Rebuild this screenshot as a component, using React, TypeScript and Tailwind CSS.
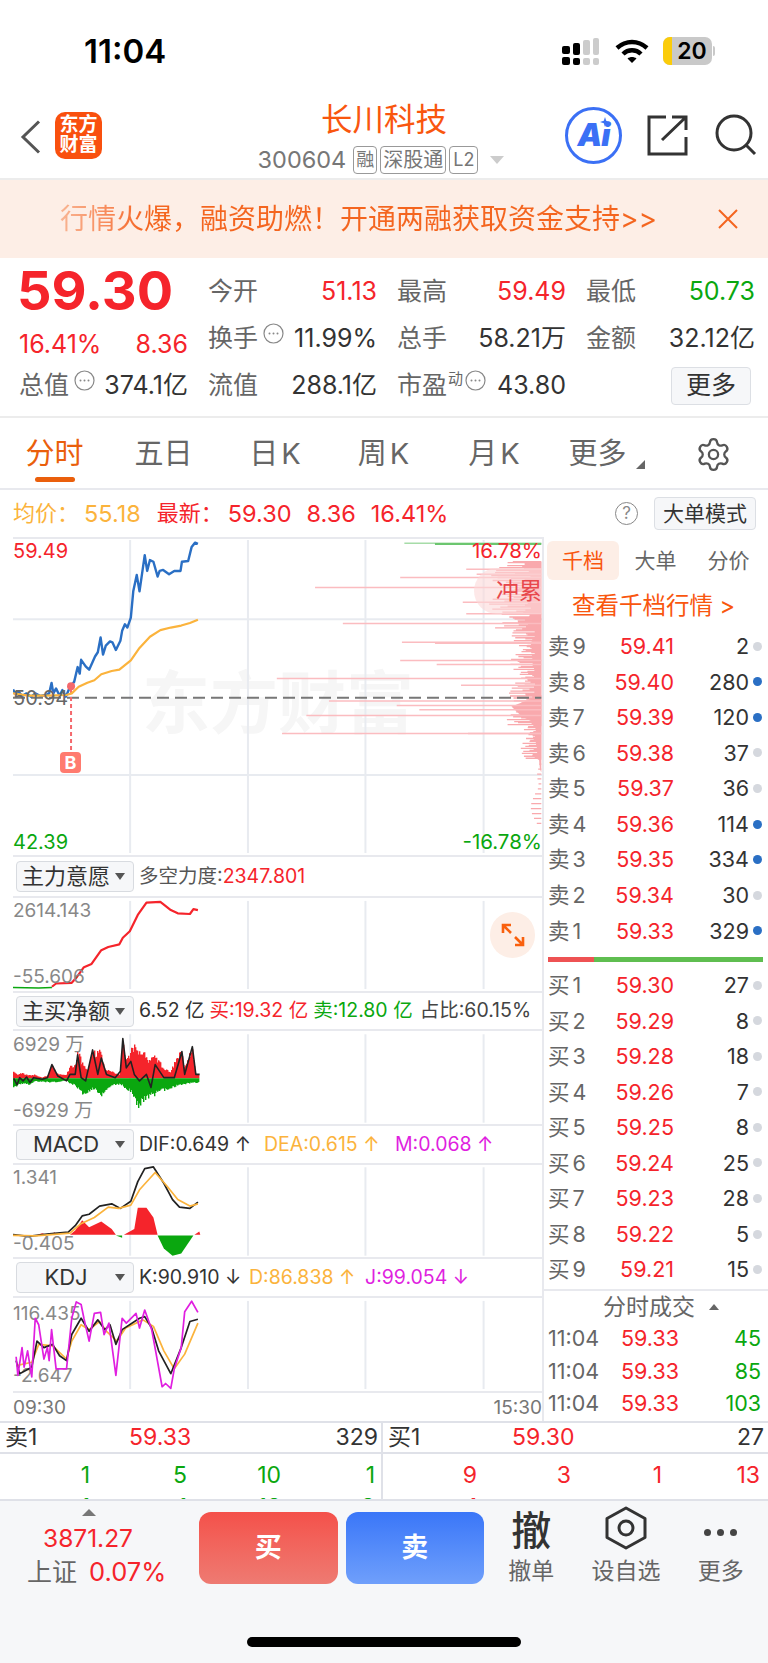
import { Settings } from 'lucide-react';

const RED = '#f5242b';
const GREEN = '#0aa70f';

type P = number[][];

const toPts = (a: P) => a.map((p) => p.join(',')).join(' ');

// walks an outline left to right and drops one thin bar per pixel
function barPath(env: P, base: number, seed: number) {
  let d = '';
  for (let x = env[0][0]; x <= env[env.length - 1][0]; x += 2.877) {
    const i = Math.max(0, env.findIndex((p) => p[0] >= x) - 1);
    const a = env[i];
    const b = env[i + 1] || a;
    const t = b[0] === a[0] ? 0 : (x - a[0]) / (b[0] - a[0]);
    const n = Math.sin(x * seed) * 43758.5;
    const wob = (n - Math.floor(n)) * 0.3 + 0.75;
    const y = base + (a[1] + (b[1] - a[1]) * t - base) * wob;
    d += `M${x.toFixed(1)} ${base}V${y.toFixed(1)}`;
  }
  return d;
}

function Line({ points, color, w = 1.5 }: { points: P; color: string; w?: number }) {
  return (
    <polyline
      points={toPts(points)}
      fill="none"
      stroke={color}
      strokeWidth={w}
      strokeLinejoin="round"
      vectorEffect="non-scaling-stroke"
    />
  );
}

function Grid({ y1, y2 }: { y1: number; y2: number }) {
  return (
    <g>
      {[373, 712, 1050, 1390].map((x) => (
        <line key={x} x1={x} x2={x} y1={y1} y2={y2} stroke="#e8ebf0" strokeWidth={2} vectorEffect="non-scaling-stroke" />
      ))}
    </g>
  );
}

const bluePts: P = [[36,478],[42,490],[52,484],[62,498],[75,490],[88,500],[100,490],[115,498],[130,495],[140,490],[147,458],[152,490],[160,475],[170,497],[178,480],[188,500],[200,470],[212,455],[222,410],[228,430],[232,388],[245,408],[255,418],[265,395],[272,378],[280,365],[288,320],[295,372],[303,345],[315,332],[322,335],[332,358],[345,330],[350,300],[358,280],[365,290],[375,260],[382,180],[392,130],[400,180],[415,70],[422,118],[430,85],[440,90],[452,135],[458,118],[468,115],[485,128],[500,118],[518,118],[522,90],[540,88],[550,45],[560,32],[568,36]];
const avgPts: P = [[36,490],[80,497],[130,497],[190,495],[205,490],[225,470],[250,458],[270,450],[290,432],[320,422],[342,418],[375,390],[400,352],[430,318],[460,298],[490,290],[520,284],[545,276],[568,266]];
const longDepth: P = [[168,905],[138,1150],[278,985],[335,1155],[338,1250],[390,1150],[402,1255],[445,795],[465,1325],[513,945],[527,1140],[540,1205],[557,880],[612,810],[612,1345],[113,1340],[213,1330],[248,1340],[128,1370]];

function depthPath() {
  let d = '';
  for (let y = 90; y < 890; y += 3) {
    const core = y < 300 ? 150 : y < 480 ? 90 : y < 590 ? 100 : y < 690 ? 60 : 30;
    const w = core * (0.2 + 0.8 * Math.abs(Math.sin(y * 1.7) * Math.cos(y * 0.43)));
    if (y > 690 && y % 15 !== 0) continue;
    d += `M${(1556 - w).toFixed(0)} ${y}H1556`;
  }
  return d;
}

function MainChart() {
  return (
    <div className="relative h-[320px] border-y-2 border-[#e8e9ee] overflow-hidden">
      <div className="absolute left-[129px] top-[126px] text-[68px] leading-[76px] font-bold text-[#f6f6f6] whitespace-nowrap">东方财富</div>
      <svg className="absolute inset-0 w-full h-full" viewBox="36 21 1522 960" preserveAspectRatio="none">
        <Grid y1={24} y2={975} />
        <line x1={36} x2={1558} y1={265} y2={265} stroke="#e8ebf0" strokeWidth={2} vectorEffect="non-scaling-stroke" />
        <line x1={36} x2={1558} y1={738} y2={738} stroke="#e8ebf0" strokeWidth={2} vectorEffect="non-scaling-stroke" />
        <polygon points="1556,90 1545,100 1540,400 1545,640 1552,720 1556,730" fill="#f9a9ad" />
        <path d={depthPath()} stroke="#f9a9ad" strokeWidth={1.3} fill="none" vectorEffect="non-scaling-stroke" />
        <polygon points="1556,495 1470,530 1500,560 1556,590" fill="#f9a9ad" />
        {longDepth.map(([y, x]) => (
          <line key={`${y}-${x}`} x1={x} x2={1556} y1={y} y2={y} stroke="#fbbcc0" strokeWidth={1.5} vectorEffect="non-scaling-stroke" />
        ))}
        <line x1={1162} x2={1556} y1={34} y2={34} stroke="#a6dca8" strokeWidth={1.5} vectorEffect="non-scaling-stroke" />
        <line x1={1250} x2={1556} y1={36} y2={36} stroke="#6cc66f" strokeWidth={2} vectorEffect="non-scaling-stroke" />
        <line x1={36} x2={1556} y1={503} y2={503} stroke="#777" strokeWidth={2} strokeDasharray="12 6" vectorEffect="non-scaling-stroke" />
        <line x1={203} x2={203} y1={480} y2={665} stroke="#f4686c" strokeWidth={2} strokeDasharray="4 3" vectorEffect="non-scaling-stroke" />
        <Line points={bluePts} color="#2a6fc4" w={2.4} />
        <Line points={avgPts} color="#fbb33c" w={2.2} />
        <ellipse cx={203} cy={468} rx={11.5} ry={12} fill="#f4686c" />
      </svg>
      <span className="absolute left-0 top-[0px] text-[20px] leading-[24px] text-[#f5242b]">59.49</span>
      <span className="absolute right-0 top-[0px] text-[20.5px] leading-[24px] text-[#f5242b]">16.78%</span>
      <span className="absolute left-0 top-[147px] text-[20px] leading-[24px] text-[#666]">50.94</span>
      <span className="absolute left-0 bottom-[1px] text-[20px] leading-[24px] text-[#0aa70f]">42.39</span>
      <span className="absolute right-0 bottom-[1px] text-[20.5px] leading-[24px] text-[#0aa70f]">-16.78%</span>
      <div className="absolute right-0 top-[29px] w-[68px] h-[46px] rounded-l-full bg-[#fbd9d9]/60 flex items-center justify-end text-[23px] text-[#e8474c]">冲累</div>
      <div className="absolute left-[47px] top-[213px] w-[21px] h-[21px] rounded-[4px] bg-[#ff7b6f] text-white text-[18px] leading-[21px] font-bold text-center">B</div>
    </div>
  );
}

function Dropdown({ label }: { label: string }) {
  return (
    <div className="ml-[3px] w-[118px] h-[31px] shrink-0 flex items-center rounded-[4px] border border-[#d8dbe0] bg-[#f6f7f9] text-[22px] text-[#333] pr-[8px]">
      <span className="flex-1 text-center whitespace-nowrap">{label}</span>
      <span className="w-0 h-0 border-x-[5px] border-x-transparent border-t-[7px] border-t-[#555]" />
    </div>
  );
}

function PanelHead({ label, children, h = 'h-[39px]' }: { label: string; children: React.ReactNode; h?: string }) {
  return (
    <div className={`${h} flex items-center gap-[5px] text-[19.5px] whitespace-nowrap`}>
      <Dropdown label={label} />
      {children}
    </div>
  );
}

const sideLabel = 'absolute left-0 text-[19px] leading-[24px] text-[#888]';

const redLine: P = [[148,380],[160,370],[205,368],[220,350],[240,320],[262,310],[290,268],[310,258],[342,250],[352,230],[372,210],[395,160],[420,122],[460,120],[490,145],[510,155],[545,157],[555,142],[568,145]];

function WillChart() {
  return (
    <div className="relative h-[95px] border-b-2 border-[#e8e9ee]">
      <svg className="absolute inset-0 w-full h-full" viewBox="36 108 1522 285" preserveAspectRatio="none">
        <Grid y1={117} y2={387} />
        <Line points={[[36,382],[110,384],[148,382]]} color="#0aa70f" w={1.5} />
        <Line points={redLine} color={RED} w={2.2} />
      </svg>
      <span className={`${sideLabel} top-[1px]`}>2614.143</span>
      <span className={`${sideLabel} bottom-[2px]`}>-55.606</span>
      <button className="absolute left-[477px] top-[14px] w-[45px] h-[46px] rounded-full bg-[#fdeee6] flex items-center justify-center">
        <svg width="24" height="24" viewBox="0 0 24 24" fill="none" stroke="#f9600e" strokeWidth="2.6">
          <path d="M2 10V2H10M2 2L10 10M22 14V22H14M22 22L14 14" />
        </svg>
      </button>
    </div>
  );
}

const buyEnv: P = [[38,625],[48,640],[60,635],[80,642],[100,640],[120,650],[140,640],[148,605],[160,635],[190,640],[200,615],[215,610],[222,560],[235,600],[250,625],[265,565],[280,570],[288,560],[300,620],[320,630],[345,640],[352,515],[360,600],[370,580],[385,545],[400,570],[412,565],[425,600],[445,575],[470,620],[490,630],[520,560],[530,620],[552,550],[562,640],[573,640]];
const sellEnv: P = [[38,682],[60,668],[85,672],[100,662],[150,665],[190,660],[220,680],[240,705],[270,685],[290,712],[310,680],[345,670],[380,700],[395,745],[410,725],[435,710],[470,690],[520,672],[573,665]];
const netLine: P = [[38,652],[48,672],[55,650],[65,660],[75,648],[85,665],[95,650],[120,655],[135,650],[148,610],[165,645],[190,660],[200,640],[215,640],[222,580],[232,650],[245,660],[265,565],[280,640],[290,590],[305,640],[330,650],[345,630],[352,530],[362,620],[375,600],[385,640],[400,660],[420,640],[433,680],[445,610],[470,650],[500,650],[522,570],[530,640],[552,555],[562,640],[573,640]];

function NetChart() {
  return (
    <div className="relative h-[95px] border-b-2 border-[#e8e9ee]">
      <svg className="absolute inset-0 w-full h-full" viewBox="36 507 1522 285" preserveAspectRatio="none">
        <Grid y1={517} y2={788} />
        <path d={barPath(buyEnv, 652, 2.3)} stroke={RED} strokeWidth={1.4} fill="none" vectorEffect="non-scaling-stroke" />
        <path d={barPath(sellEnv, 652, 3.1)} stroke={GREEN} strokeWidth={1.4} fill="none" vectorEffect="non-scaling-stroke" />
        <Line points={netLine} color="#222" w={1.6} />
      </svg>
      <span className={`${sideLabel} top-[2px]`}>6929 万</span>
      <span className={`${sideLabel} bottom-[1px]`}>-6929 万</span>
    </div>
  );
}

const macdDif: P = [[36,342],[80,348],[140,340],[195,335],[215,315],[235,285],[255,280],[285,255],[320,248],[345,262],[375,240],[395,180],[415,140],[440,135],[470,185],[495,235],[515,258],[545,262],[568,243]];
const macdDea: P = [[36,345],[100,346],[200,338],[230,310],[270,290],[310,258],[340,262],[375,252],[400,205],[445,152],[480,195],[510,235],[545,255],[568,248]];

function MacdChart() {
  return (
    <div className="relative h-[94px] border-b-2 border-[#e8e9ee]">
      <svg className="absolute inset-0 w-full h-full" viewBox="36 129 1522 282" preserveAspectRatio="none">
        <Grid y1={136} y2={407} />
        <polygon fill={RED} points="105,343 120,338 135,343" />
        <polygon fill={RED} points="145,343 155,335 165,343" />
        <polygon fill={RED} points="200,343 215,330 235,298 255,320 290,302 320,325 332,343" />
        <polygon fill={RED} points="355,343 385,325 395,260 420,260 440,290 452,343" />
        <polygon fill={RED} points="558,343 572,333 575,343" />
        <polygon fill={GREEN} points="332,345 350,352 350,345" />
        <polygon fill={GREEN} points="452,345 470,385 495,407 520,400 555,345" />
        <Line points={macdDif} color="#222" w={1.7} />
        <Line points={macdDea} color="#fbb33c" w={1.7} />
      </svg>
      <span className={`${sideLabel} top-[1px]`}>1.341</span>
      <span className={`${sideLabel} bottom-[1px]`}>-0.405</span>
    </div>
  );
}

const kdjJ: P = [[45,708],[50,765],[62,680],[68,740],[78,690],[90,770],[100,590],[110,610],[125,715],[135,680],[140,720],[147,625],[160,745],[190,745],[205,590],[218,540],[232,548],[240,590],[255,660],[270,575],[288,572],[298,640],[312,605],[332,765],[350,590],[362,605],[390,575],[400,620],[415,565],[435,625],[448,700],[465,800],[475,790],[490,805],[500,745],[520,680],[530,570],[550,538],[568,572]];
const kdjK: P = [[45,720],[55,760],[90,740],[105,660],[125,680],[150,670],[170,705],[190,720],[205,640],[232,590],[255,630],[280,595],[300,625],[315,610],[332,670],[350,625],[400,590],[415,585],[435,620],[455,690],[490,760],[520,680],[545,600],[568,593]];
const kdjD: P = [[45,735],[90,725],[110,670],[150,675],[190,715],[205,660],[232,610],[255,625],[285,600],[305,630],[335,660],[360,620],[410,595],[440,615],[470,690],[500,745],[530,700],[568,605]];

function KdjChart() {
  return (
    <div className="relative h-[95px] border-b-2 border-[#e8e9ee]">
      <span className={`${sideLabel} top-[4px]`}>116.435</span>
      <span className={`${sideLabel} bottom-[3px]`}>-2.647</span>
      <svg className="absolute inset-0 w-full h-full" viewBox="36 528 1522 285" preserveAspectRatio="none">
        <Grid y1={537} y2={807} />
        <Line points={kdjD} color="#fbb33c" w={1.7} />
        <Line points={kdjK} color="#222" w={1.7} />
        <Line points={kdjJ} color="#e01fe0" w={1.7} />
      </svg>
    </div>
  );
}

function LeftCharts() {
  return (
    <div className="w-[529px] ml-[13px] shrink-0">
      <MainChart />
      <PanelHead label="主力意愿">
        <span className="text-[#555]">多空力度:<span className="text-[#f5242b]">2347.801</span></span>
      </PanelHead>
      <div className="border-t-2 border-[#e8e9ee]" />
      <WillChart />
      <PanelHead label="主买净额" h="h-[36px]">
        <span className="text-[#333]">6.52 亿</span>
        <span className="text-[#f5242b]">买:19.32 亿</span>
        <span className="text-[#0aa70f]">卖:12.80 亿</span>
        <span className="text-[#444] ml-[2px]">占比:60.15%</span>
      </PanelHead>
      <div className="border-t-2 border-[#e8e9ee]" />
      <NetChart />
      <PanelHead label="MACD" h="h-[37px]">
        <span className="text-[#333] w-[120px]">DIF:0.649 ↑</span>
        <span className="text-[#fbb33c] w-[126px]">DEA:0.615 ↑</span>
        <span className="text-[#e01fe0]">M:0.068 ↑</span>
      </PanelHead>
      <div className="border-t-2 border-[#e8e9ee]" />
      <MacdChart />
      <PanelHead label="KDJ" h="h-[37px]">
        <span className="text-[#333] w-[105px]">K:90.910 ↓</span>
        <span className="text-[#fbb33c] w-[111px]">D:86.838 ↑</span>
        <span className="text-[#e01fe0]">J:99.054 ↓</span>
      </PanelHead>
      <div className="border-t-2 border-[#e8e9ee]" />
      <KdjChart />
      <div className="h-[30px] flex items-center justify-between text-[19px] text-[#777]">
        <span>09:30</span>
        <span>15:30</span>
      </div>
    </div>
  );
}

const asks = [
  ['卖', '9', '59.41', '2', false], ['卖', '8', '59.40', '280', true], ['卖', '7', '59.39', '120', true],
  ['卖', '6', '59.38', '37', false], ['卖', '5', '59.37', '36', false], ['卖', '4', '59.36', '114', true],
  ['卖', '3', '59.35', '334', true], ['卖', '2', '59.34', '30', false], ['卖', '1', '59.33', '329', true],
] as const;
const bids = [
  ['买', '1', '59.30', '27', false], ['买', '2', '59.29', '8', false], ['买', '3', '59.28', '18', false],
  ['买', '4', '59.26', '7', false], ['买', '5', '59.25', '8', false], ['买', '6', '59.24', '25', false],
  ['买', '7', '59.23', '28', false], ['买', '8', '59.22', '5', false], ['买', '9', '59.21', '15', false],
] as const;

function BookRow({ row }: { row: readonly [string, string, string, string, boolean] }) {
  const [side, n, price, qty, big] = row;
  return (
    <div className="h-[35.55px] shrink-0 flex items-center text-[21.5px] pl-[4px]">
      <span className="w-[42px] text-[#666] whitespace-nowrap">{side}<span className="ml-[3px]">{n}</span></span>
      <span className="w-[84px] text-right text-[#f5242b]">{price}</span>
      <span className="w-[75px] text-right text-[#333]">{qty}</span>
      <span className={big ? 'ml-[4px] w-[9px] h-[9px] rounded-full bg-[#2a6fc4]' : 'ml-[4px] w-[9px] h-[9px] rounded-full bg-[#d5d8de]'} />
    </div>
  );
}

function OrderBook() {
  return (
    <div className="flex-1 border-l-2 border-[#e8e9ee] flex flex-col overflow-hidden">
      <div className="mt-[4px] ml-[3px] flex h-[39px] shrink-0 text-[21px] text-[#666]">
        <div className="w-[72px] rounded-[6px] bg-[#fdeee6] text-[#f9560e] flex items-center justify-center">千档</div>
        <div className="w-[73px] flex items-center justify-center">大单</div>
        <div className="w-[73px] flex items-center justify-center">分价</div>
      </div>
      <div className="h-[48.5px] shrink-0 flex items-center pl-[28px] pt-[3px] text-[23.5px] text-[#f9560e] whitespace-nowrap">查看千档行情 &gt;</div>
      {asks.map((r) => <BookRow key={r[1]} row={r} />)}
      <div className="mt-[9px] mb-[5px] ml-[4px] w-[215px] h-[5px] shrink-0 flex">
        <div className="w-[46px] bg-[#ee5253]" />
        <div className="flex-1 bg-[#5fbe50]" />
      </div>
      {bids.map((r) => <BookRow key={r[1]} row={r} />)}
      <div className="mt-[2px] shrink-0 border-t-2 border-[#e8e9ee] h-[33px] flex items-center justify-center gap-[14px] pl-[10px] text-[23px] text-[#666]">
        <span>分时成交</span>
        <span className="w-0 h-0 border-x-[5px] border-x-transparent border-b-[6px] border-b-[#666]" />
      </div>
      {['45', '85', '103'].map((q) => (
        <div key={q} className="h-[32.5px] shrink-0 flex items-center text-[21.5px] pl-[4px]">
          <span className="w-[56px] text-[#666]">11:04</span>
          <span className="w-[75px] text-right text-[#f5242b]">59.33</span>
          <span className="w-[82px] text-right text-[#0aa70f]">{q}</span>
        </div>
      ))}
    </div>
  );
}

function MoreIcon() {
  return (
    <svg width="21" height="21" viewBox="0 0 21 21" className="shrink-0 -mt-[10px]">
      <circle cx="10.5" cy="10.5" r="9.5" fill="none" stroke="#888" strokeWidth="1.2" />
      <circle cx="6.5" cy="10.5" r="1" fill="#888" />
      <circle cx="10.5" cy="10.5" r="1" fill="#888" />
      <circle cx="14.5" cy="10.5" r="1" fill="#888" />
    </svg>
  );
}

function Cell({ label, value, color = 'text-[#333]', icon }: { label: string; value: string; color?: string; icon?: boolean }) {
  return (
    <div className="flex items-center justify-between whitespace-nowrap">
      <span className="flex items-center gap-[5px] text-[#666] text-[25px]">{label}{icon && <MoreIcon />}</span>
      <span className={color}>{value}</span>
    </div>
  );
}

function StatusBar() {
  return (
    <div className="h-[96px] relative">
      <span className="absolute left-[84px] top-[32px] text-[33px] leading-[38px] font-semibold text-black">11:04</span>
      <div className="absolute left-[562px] top-[38px] flex items-end gap-[3px]">
        <div className="flex flex-col gap-[3px]">
          <div className="w-[8px] h-[8px] mt-[7px] rounded-[2px] bg-black" />
          <div className="w-[8px] h-[8px] rounded-[2px] bg-black" />
        </div>
        <div className="flex flex-col gap-[3px]">
          <div className="w-[7px] h-[12px] rounded-[2px] bg-black" />
          <div className="w-[7px] h-[7px] rounded-[2px] bg-black" />
        </div>
        <div className="flex flex-col gap-[3px]">
          <div className="w-[7px] h-[15px] rounded-[2px] bg-[#ccc]" />
          <div className="w-[7px] h-[7px] rounded-[2px] bg-[#ccc]" />
        </div>
        <div className="flex flex-col gap-[3px]">
          <div className="w-[6px] h-[17px] rounded-[2px] bg-[#ccc]" />
          <div className="w-[6px] h-[7px] rounded-[2px] bg-[#ccc]" />
        </div>
      </div>
      <svg className="absolute left-[615px] top-[39px]" width="34" height="25" viewBox="0 0 34 25" fill="none" stroke="#000" strokeWidth="4.4">
        <path d="M2 9C11 1 23 1 32 9" />
        <path d="M8 15C13 10 21 10 26 15" />
        <path d="M17 24L12.5 19.5C15 17.5 19 17.5 21.5 19.5Z" fill="#000" stroke="none" />
      </svg>
      <div className="absolute left-[663px] top-[37px] w-[49px] h-[28px] rounded-[7px] bg-[#c9c9c9] overflow-hidden flex">
        <div className="w-[9px] bg-[#fbcc0a]" />
        <span className="flex-1 text-center text-[23px] leading-[28px] font-semibold text-black">20</span>
      </div>
      <div className="absolute left-[713px] top-[46px] w-[2px] h-[10px] rounded-r bg-[#c9c9c9]" />
    </div>
  );
}

function NavBar() {
  return (
    <div className="h-[84px] border-b-2 border-[#ececec] relative flex flex-col items-center">
      <div className="absolute left-[20px] top-[24px]">
        <svg width="21" height="34" viewBox="0 0 21 34" fill="none" stroke="#555" strokeWidth="3">
          <path d="M19 1.5L3 17L19 32.5" />
        </svg>
      </div>
      <div className="absolute left-[55px] top-[16px] w-[47px] h-[47px] rounded-[10px] bg-[#f9500e] text-white font-bold text-[19px] leading-[20px] text-center pt-[3px]">
        东方<br />财富
      </div>
      <div className="mt-[6px] text-[31.5px] leading-[36px] text-[#f9560e]">长川科技</div>
      <div className="mt-[8px] flex items-center text-[23.5px] leading-[28px] text-[#777] -translate-x-[3px]">
        <span>300604</span>
        <span className="ml-[7px] px-[2px] h-[28px] rounded-[4px] border border-[#999] text-[18px] leading-[26px]">融</span>
        <span className="ml-[3px] px-[2px] h-[28px] rounded-[4px] border border-[#999] text-[20px] leading-[26px]">深股通</span>
        <span className="ml-[3px] px-[3px] h-[28px] rounded-[4px] border border-[#999] text-[18px] leading-[26px]">L2</span>
        <span className="ml-[12px] w-0 h-0 border-x-[7px] border-x-transparent border-t-[8px] border-t-[#ccc]" />
      </div>
      <div className="absolute left-[565px] top-[11px] w-[57px] h-[57px] rounded-full border-[3px] border-[#3b70f5] flex items-center justify-center text-[31px] font-black italic text-[#3b70f5] tracking-[-1px]">
        Ai
        <svg className="absolute left-[32px] top-[7px]" width="10" height="10" viewBox="0 0 10 10" fill="#3b70f5">
          <path d="M5 0L6.2 3.8L10 5L6.2 6.2L5 10L3.8 6.2L0 5L3.8 3.8Z" />
        </svg>
      </div>
      <svg className="absolute left-[647px] top-[19px]" width="41" height="41" viewBox="0 0 41 41" fill="none" stroke="#333" strokeWidth="3">
        <path d="M19 2H2V39H39V22" />
        <path d="M15 25L39 2M25 2H39V15" />
      </svg>
      <svg className="absolute left-[715px] top-[18px]" width="42" height="42" viewBox="0 0 42 42" fill="none" stroke="#333" strokeWidth="3">
        <circle cx="19" cy="19" r="17" />
        <path d="M31 31L40 40" />
      </svg>
    </div>
  );
}

function Banner() {
  return (
    <div className="h-[78px] bg-[#fdeee6] flex items-center pl-[60px] pr-[30px]">
      <div className="flex-1">
        <span className="whitespace-nowrap text-[28px] bg-gradient-to-r from-[#f8b593] from-0% to-[#f4651f] to-[14%] bg-clip-text text-transparent">行情火爆，融资助燃！开通两融获取资金支持&gt;&gt;</span>
      </div>
      <svg width="20" height="20" viewBox="0 0 20 20" fill="none" stroke="#f4651f" strokeWidth="2">
        <path d="M1 1L19 19M19 1L1 19" />
      </svg>
    </div>
  );
}

function Quote() {
  return (
    <div className="h-[160px] border-b-2 border-[#ececec] pl-[19px] pr-[13px] pt-[10px]">
      <div className="grid grid-cols-4 gap-x-[20px] grid-rows-[47px_47px_47px] items-center text-[25px]">
        <div className="text-[54px] leading-[46px] font-bold text-[#f5242b] whitespace-nowrap -ml-[2px] -mt-[2px]">59.30</div>
        <Cell label="今开" value="51.13" color="text-[#f5242b]" />
        <Cell label="最高" value="59.49" color="text-[#f5242b]" />
        <Cell label="最低" value="50.73" color="text-[#0aa70f]" />
        <div className="flex justify-between pt-[12px] text-[#f5242b]">
          <span>16.41%</span>
          <span>8.36</span>
        </div>
        <Cell label="换手" value="11.99%" icon />
        <Cell label="总手" value="58.21万" />
        <Cell label="金额" value="32.12亿" />
        <Cell label="总值" value="374.1亿" icon />
        <Cell label="流值" value="288.1亿" />
        <div className="flex items-center justify-between whitespace-nowrap">
          <span className="flex items-center text-[#666] text-[25px]">
            市盈<span className="text-[15px] leading-none -mt-[14px] ml-[1px] mr-[2px]">动</span><MoreIcon />
          </span>
          <span className="text-[#333]">43.80</span>
        </div>
        <div className="flex justify-end pr-[4px]">
          <div className="w-[80px] h-[38px] rounded-[4px] border border-[#dcdfe4] bg-[#f6f7f9] flex items-center justify-center text-[25px] text-[#333]">更多</div>
        </div>
      </div>
    </div>
  );
}

function Tabs() {
  return (
    <div className="h-[72px] border-b-2 border-[#e8e9ee] relative flex items-start pt-[16px] text-[29px] leading-[40px] text-[#666] whitespace-nowrap">
      <div className="w-[109px] flex flex-col items-center text-[#ea5f0c]">
        分时
        <div className="mt-[3px] w-[40px] h-[5px] rounded-full bg-[#ea5f0c]" />
      </div>
      <div className="w-[109px] text-center">五日</div>
      <div className="w-[109px] text-center pl-[5px]">日<span className="ml-[3px]">K</span></div>
      <div className="w-[109px] text-center pl-[4px]">周<span className="ml-[3px]">K</span></div>
      <div className="w-[109px] text-center pl-[7px]">月<span className="ml-[3px]">K</span></div>
      <div className="w-[109px] flex items-end justify-center pl-[14px]">
        更多
        <span className="ml-[9px] mb-[5px] w-0 h-0 border-l-[9px] border-l-transparent border-b-[9px] border-b-[#666]" />
      </div>
      <Settings className="absolute left-[695px] top-[18px]" size={37} strokeWidth={1.5} color="#555" />
    </div>
  );
}

function InfoRow() {
  return (
    <div className="h-[47px] flex items-center pl-[13px] pr-[12px] text-[22px] whitespace-nowrap">
      <span className="text-[#fbb33c]">均价：</span>
      <span className="text-[#fbb33c] ml-[5px] text-[23.5px]">55.18</span>
      <span className="text-[#f5242b] ml-[16px]">最新：</span>
      <span className="text-[#f5242b] ml-[5px] text-[23.5px]">59.30</span>
      <span className="text-[#f5242b] ml-[15px] text-[23.5px]">8.36</span>
      <span className="text-[#f5242b] ml-[15px] text-[23.5px]">16.41%</span>
      <span className="ml-auto mr-[16px] w-[23px] h-[23px] rounded-full border border-[#888] text-[#888] text-[17px] leading-[21px] text-center">?</span>
      <div className="w-[102px] h-[33px] rounded-[4px] border border-[#dcdfe4] bg-[#f6f7f9] flex items-center justify-center text-[21px] text-[#333]">大单模式</div>
    </div>
  );
}

function TradeStrip() {
  return (
    <div className="text-[23px] whitespace-nowrap">
      <div className="h-[33px] border-y-2 border-[#dfe1e8] flex leading-[29px]">
        <div className="w-[383px] flex pl-[5px] pr-[3px] border-r-2 border-[#dfe1e8]">
          <span className="w-[124px] text-[#333]">卖1</span>
          <span className="text-[#f5242b]">59.33</span>
          <span className="ml-auto text-[#333]">329</span>
        </div>
        <div className="flex-1 flex pl-[5px] pr-[4px]">
          <span className="w-[124px] text-[#333]">买1</span>
          <span className="text-[#f5242b]">59.30</span>
          <span className="ml-auto text-[#333]">27</span>
        </div>
      </div>
      <div className="h-[45px] overflow-hidden flex">
        <div className="w-[383px] border-r-2 border-[#dfe1e8] text-[#0aa70f] pt-[5px]">
          {[['1', '5', '10', '1'], ['1', '1', '12', '3']].map((line, i) => (
            <div key={i} className="grid grid-cols-[90px_97px_94px_94px] h-[32px] leading-[32px] text-right">
              {line.map((v, j) => <span key={j}>{v}</span>)}
            </div>
          ))}
        </div>
        <div className="flex-1 text-[#f5242b] pt-[5px]">
          {[['9', '3', '1', '13'], ['1', '', '', '']].map((line, i) => (
            <div key={i} className="grid grid-cols-[94px_94px_91px_98px] h-[32px] leading-[32px] text-right">
              {line.map((v, j) => <span key={j}>{v}</span>)}
            </div>
          ))}
        </div>
      </div>
    </div>
  );
}

function Footer() {
  return (
    <div className="h-[166px] bg-[#f6f7f9] border-t-2 border-[#dfe1e8] relative">
      <div className="flex pt-[11px]">
        <div className="w-[199px] shrink-0 flex flex-col items-start">
          <span className="ml-[82px] -mt-[3px] w-0 h-0 border-x-[7px] border-x-transparent border-b-[7px] border-b-[#777]" />
          <div className="ml-[43px] mt-[8px] text-[24.5px] leading-[28px] text-[#f5242b]">3871.27</div>
          <div className="ml-[27px] mt-[3px] text-[25.5px] leading-[34px] whitespace-nowrap">
            <span className="text-[#666] text-[25px]">上证</span>
            <span className="ml-[12px] text-[#f5242b]">0.07%</span>
          </div>
        </div>
        <div className="w-[139px] h-[72px] rounded-[12px] bg-gradient-to-b from-[#f4504a] to-[#ee7a72] flex items-center justify-center text-white font-bold text-[27px]">买</div>
        <div className="ml-[8px] w-[139px] h-[72px] rounded-[12px] bg-gradient-to-b from-[#3a76f8] to-[#6f9ffb] flex items-center justify-center text-white font-bold text-[27px]">卖</div>
        <div className="w-[95px] flex flex-col items-center text-[#666] text-[23px] leading-[30px]">
          <span className="h-[44px] -mt-[4px] text-[40px] leading-[46px] font-medium text-[#333]">撤</span>
          <span className="mt-[4px]">撤单</span>
        </div>
        <div className="w-[95px] flex flex-col items-center text-[#666] text-[23px] leading-[30px]">
          <svg className="-mt-[6px] mb-[2px]" width="44" height="44" viewBox="0 0 44 44" fill="none" stroke="#333" strokeWidth="3">
            <path d="M22 2L41 12.5V31.5L22 42L3 31.5V12.5Z" strokeLinejoin="round" />
            <circle cx="22" cy="22" r="7" />
          </svg>
          <span className="mt-[4px]">设自选</span>
        </div>
        <div className="w-[95px] flex flex-col items-center text-[#666] text-[23px] leading-[30px]">
          <div className="h-[40px] flex items-center gap-[6px]">
            <span className="w-[7px] h-[7px] rounded-full bg-[#444]" />
            <span className="w-[7px] h-[7px] rounded-full bg-[#444]" />
            <span className="w-[7px] h-[7px] rounded-full bg-[#444]" />
          </div>
          <span className="mt-[4px]">更多</span>
        </div>
      </div>
      <div className="absolute left-[247px] top-[136px] w-[274px] h-[10px] rounded-full bg-black" />
    </div>
  );
}

export default function App() {
  return (
    <div className="w-[768px] h-[1663px] overflow-hidden bg-white font-['Inter','Noto_Sans_CJK_SC',sans-serif]">
      <StatusBar />
      <NavBar />
      <Banner />
      <Quote />
      <Tabs />
      <InfoRow />
      <div className="flex h-[884px]">
        <LeftCharts />
        <OrderBook />
      </div>
      <TradeStrip />
      <Footer />
    </div>
  );
}
